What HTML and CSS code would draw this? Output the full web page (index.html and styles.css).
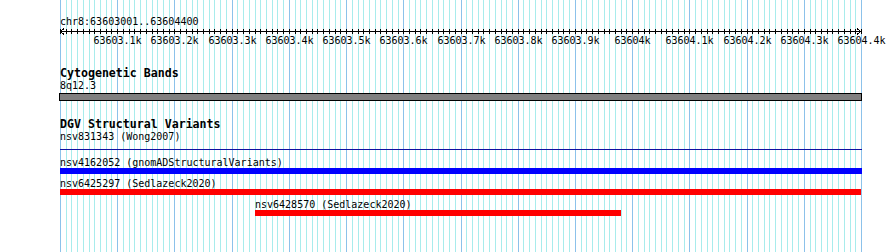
FILE: index.html
```html
<!DOCTYPE html>
<html lang="en">
<head>
    <meta charset="UTF-8">
    <title>chr8:63603001..63604400</title>
    <link rel="stylesheet" href="styles.css">
</head>
<body>
    <div class="panel">
        <!-- Grid behind all tracks -->
        <svg class="grid" id="grid" width="802" height="252"></svg>

        <!-- Ruler -->
        <div class="ruler">
            <div class="location">chr8:63603001..63604400</div>
            <svg class="axis" id="axis" width="830" height="22"></svg>
        </div>

        <!-- Cytogenetic bands -->
        <div class="track track-cyto">
            <div class="track-title">Cytogenetic Bands</div>
            <div class="label">8q12.3</div>
            <div class="band"></div>
        </div>

        <!-- DGV -->
        <div class="track track-dgv">
            <div class="track-title">DGV Structural Variants</div>
            <div class="feature" style="margin-left: 0px; width: 802px;">
                <div class="label">nsv831343 (Wong2007)</div>
                <div class="feature-line"></div>
            </div>
            <div class="feature" style="margin-left: 0px; width: 802px;">
                <div class="label">nsv4162052 (gnomADStructuralVariants)</div>
                <div class="feature-bar bar-blue"></div>
            </div>
            <div class="feature" style="margin-left: 0px; width: 801px;">
                <div class="label">nsv6425297 (Sedlazeck2020)</div>
                <div class="feature-bar bar-red"></div>
            </div>
            <div class="feature" style="margin-left: 195px; width: 366px;">
                <div class="label">nsv6428570 (Sedlazeck2020)</div>
                <div class="feature-bar bar-red"></div>
            </div>
        </div>
    </div>

    <script>
        var NS = "http://www.w3.org/2000/svg";
        var scale = 801 / 1400; // px per bp

        function line(svg, x1, y1, x2, y2, cls) {
            var l = document.createElementNS(NS, "line");
            l.setAttribute("x1", x1);
            l.setAttribute("y1", y1);
            l.setAttribute("x2", x2);
            l.setAttribute("y2", y2);
            l.setAttribute("class", cls);
            svg.appendChild(l);
        }

        var grid = document.getElementById("grid");
        var axis = document.getElementById("axis");

        // grid lines and ticks every 10bp
        for (var i = 0; i <= 140; i++) {
            var x = Math.round(i * 10 * scale) + 0.5;
            line(grid, x, 0, x, 252, i % 10 === 0 ? "major" : "minor");
            line(axis, x, 2, x, 7, "tick");
        }

        // axis line with arrows
        line(axis, 0, 4.5, 801, 4.5, "tick");
        var arrows = document.createElementNS(NS, "path");
        arrows.setAttribute("d", "M4 1.5 L0.5 4.5 L4 7.5 M797 1.5 L800.5 4.5 L797 7.5");
        arrows.setAttribute("class", "tick");
        axis.appendChild(arrows);

        // labels every 100bp
        for (var k = 1; k <= 14; k++) {
            var pos = 63603000 + k * 100;
            var kb = pos / 1000;
            var t = document.createElementNS(NS, "text");
            t.setAttribute("x", Math.round(k * 100 * scale) + 0.5);
            t.setAttribute("y", 17);
            t.setAttribute("class", "tick-label");
            t.textContent = (pos % 1000 === 0 ? kb.toFixed(0) : kb.toFixed(1)) + "k";
            axis.appendChild(t);
        }
    </script>
</body>
</html>
```

FILE: styles.css
```css
body {
    margin: 0;
    background-color: #ffffff;
    font-family: "DejaVu Sans Mono", monospace;
    font-size: 10px;
    color: #000000;
    overflow: hidden;
}

/* Panel holding ruler and tracks */
.panel {
    position: relative;
    z-index: 0;
    margin-left: 60px;
    width: 802px;
    height: 252px;
}

.grid {
    position: absolute;
    top: 0;
    left: 0;
    z-index: -1;
    shape-rendering: crispEdges;
}

.grid .minor {
    stroke: #a8ecec;
    stroke-width: 1;
}

.grid .major {
    stroke: #8cc2ea;
    stroke-width: 1;
}

/* Ruler */
.ruler {
    padding-top: 16px;
}

.location {
    height: 12px;
    line-height: 12px;
    white-space: nowrap;
}

.axis {
    display: block;
    margin-top: -1px;
    overflow: visible;
}

.axis .tick {
    stroke: #000000;
    stroke-width: 1;
    fill: none;
    shape-rendering: crispEdges;
}

.axis .tick-label {
    font-family: "DejaVu Sans Mono", monospace;
    font-size: 10px;
    text-anchor: middle;
    fill: #000000;
}

/* Tracks */
.track {
    display: flex;
    flex-direction: column;
}

.track-title {
    height: 13px;
    line-height: 13px;
    font-size: 11.6px;
    font-weight: bold;
    white-space: nowrap;
}

.track-cyto {
    margin-top: 18px;
}

.track-cyto .label {
    height: 12px;
    line-height: 12px;
}

.band {
    margin-top: 1px;
    margin-left: -1px;
    width: 801px;
    height: 6px;
    background-color: #808080;
    border: 1px solid #000000;
}

.track-dgv {
    margin-top: 17px;
}

.feature {
    display: flex;
    flex-direction: column;
}

.feature .label {
    height: 11px;
    line-height: 11px;
    white-space: nowrap;
}

.feature + .feature {
    margin-top: 4px;
}

.feature-line {
    margin: 7px 0 3px;
    height: 1px;
    background-color: #1010a0;
}

.feature-bar {
    height: 6px;
}

.bar-blue {
    background-color: #0000ff;
}

.bar-red {
    background-color: #ff0000;
}
```
